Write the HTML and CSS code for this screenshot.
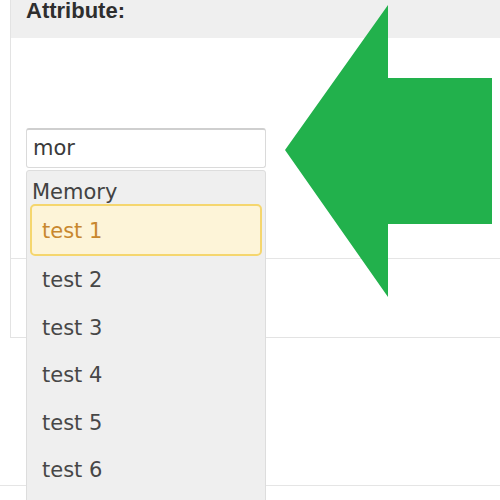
FILE: index.html
```
<!DOCTYPE html>
<html>
<head>
<meta charset="utf-8">
<link rel="stylesheet" href="styles.css">
</head>
<body>
<div class="page">
  <div class="panel">
    <div class="panel-head">Attribute:</div>
    <div class="section-main">
      <div class="search-input">mor</div>
    </div>
    <div class="section-extra"></div>
  </div>
  <div class="rule"></div>

  <div class="dropdown">
    <div class="group-label">Memory</div>
    <div class="item item-active">test 1</div>
    <div class="item">test 2</div>
    <div class="item">test 3</div>
    <div class="item">test 4</div>
    <div class="item">test 5</div>
    <div class="item">test 6</div>
  </div>

  <svg class="arrow" width="215" height="300" viewBox="285 0 215 300">
    <polygon points="285,150 388,5 388,78 492,78 492,224 388,224 388,297" fill="#22b14c"/>
  </svg>
</div>
</body>
</html>
```
FILE: styles.css
```
html, body {
  margin: 0;
  padding: 0;
  background: #ffffff;
  overflow: hidden;
}
.page {
  position: relative;
  width: 500px;
  height: 500px;
  overflow: hidden;
  font-family: "DejaVu Sans", "Open Sans", sans-serif;
}
.panel {
  margin-left: 10px;
  border-left: 1px solid #e3e3e3;
  border-bottom: 1px solid #e3e3e3;
}
.panel-head {
  height: 38px;
  background: #efefef;
  padding-left: 15px;
  font-family: "Liberation Sans", Arial, sans-serif;
  font-weight: bold;
  font-size: 22px;
  line-height: 22px;
  color: #2e2e2e;
}
.section-main {
  height: 130px;
  padding-top: 90px;
  padding-left: 15px;
  border-bottom: 1px solid #e5e5e5;
}
.search-input {
  box-sizing: border-box;
  width: 240px;
  height: 40px;
  background: #fff;
  border: 1px solid #dadada;
  border-top: 2px solid #cfcfcf;
  border-radius: 3px;
  padding-left: 6px;
  font-size: 21px;
  line-height: 37px;
  color: #3a3a3a;
}
.section-extra {
  height: 78px;
}
.rule {
  margin-top: 147px;
  border-top: 1px solid #e5e5e5;
}
.dropdown {
  position: absolute;
  left: 26px;
  top: 170px;
  width: 240px;
  height: 360px;
  box-sizing: border-box;
  background: #efefef;
  border: 1px solid #dddddd;
  border-radius: 3px 3px 0 0;
}
.group-label {
  height: 25px;
  padding: 8px 0 0 5px;
  font-size: 21px;
  line-height: 27px;
  color: #424242;
}
.item {
  height: 47.5px;
  line-height: 49px;
  padding-left: 15px;
  font-size: 21px;
  color: #474747;
}
.item-active {
  box-sizing: border-box;
  height: 52px;
  line-height: 50px;
  margin: 0 3px;
  padding-left: 10px;
  background: #fdf4d8;
  border: 2px solid #f5d66e;
  border-radius: 5px;
  color: #c8872e;
}
.arrow {
  position: absolute;
  left: 285px;
  top: 0;
}
```
